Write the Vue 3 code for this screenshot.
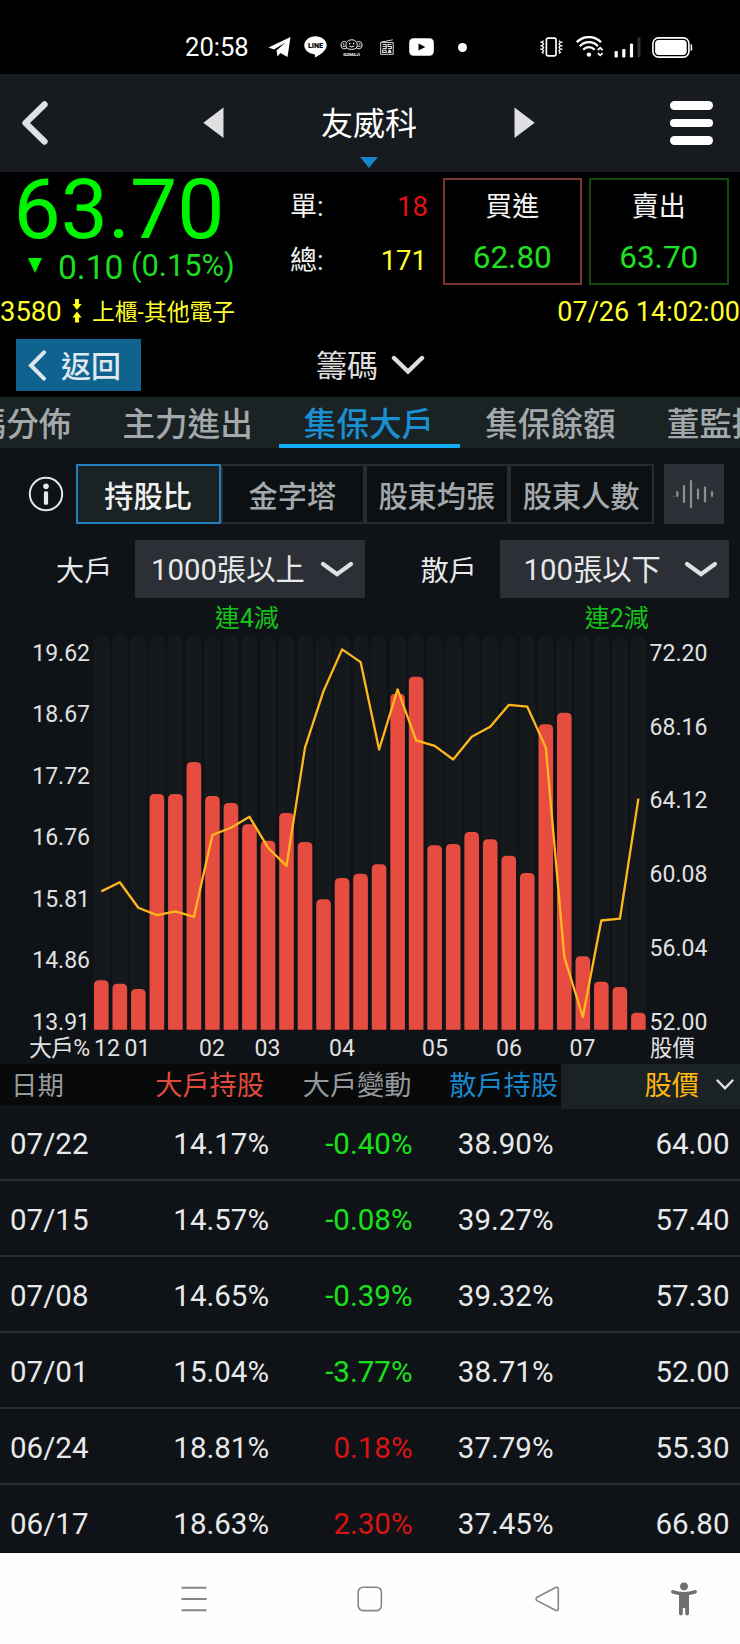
<template>
  <div class="phone">
    <div class="status-bar">
      <span class="clock">20:58</span>
      <svg class="ic-telegram" width="23" height="21" viewBox="0 0 23 21">
        <path d="M0.5 10.5 L22.5 0 L19.5 20 L12.5 16 L9.5 19.5 L8.5 13.5 L17.5 5.5 L6 12.5 Z" fill="#fff" />
      </svg>
      <svg class="ic-line" width="23" height="22" viewBox="0 0 23 22">
        <path d="M11.5 0.3 C5.2 0.3 0.3 4.3 0.3 9.3 C0.3 14 4.5 17.6 10.2 18.2 C11.3 18.5 11 19.6 10.9 21.5 C16 19 22.7 14.8 22.7 9.3 C22.7 4.3 17.8 0.3 11.5 0.3 Z" fill="#fff" />
        <text x="11.5" y="12.1" text-anchor="middle" font-size="7.2" font-weight="900" fill="#000">LINE</text>
      </svg>
      <svg class="ic-gomaji" width="23" height="17" viewBox="0 0 23 17">
        <g fill="none" stroke="#fff" stroke-width="1">
          <path d="M6.5 8.5 C4.8 5 7 0.8 11.7 0.8 C16.4 0.8 18.4 5 16.7 8.5 C15 11 8.4 11 6.5 8.5 Z" />
          <path d="M6 2.9 C2 1.6 0.6 4.4 1.2 7.2 C1.8 10.2 4.8 10.2 6.8 9" />
          <path d="M17.2 2.9 C21 1.6 22.5 4.4 21.9 7.2 C21.2 10.2 18.4 10.2 16.5 9" />
          <path d="M9.3 7 Q11.7 8.8 14.1 7 M2.6 7.2 H5.2 M18.2 7.2 H20.6" />
        </g>
        <circle cx="9.7" cy="4.6" r="0.8" fill="#fff" />
        <circle cx="13.7" cy="4.6" r="0.8" fill="#fff" />
        <circle cx="3.6" cy="5" r="0.7" fill="#fff" />
        <circle cx="19.8" cy="5" r="0.7" fill="#fff" />
        <text x="11.5" y="16.5" text-anchor="middle" font-size="4.4" font-weight="700" fill="#fff">GOMAJI</text>
      </svg>
      <svg class="ic-news" width="14" height="16" viewBox="0 0 14 16">
        <path d="M0.7 15.3 V3.6 H13.2 V15.3 Z M1 3.2 L12.8 0.8" fill="none" stroke="#ddd" stroke-width="1" />
        <path d="M2.6 5.5 H6.2 V9.5 H2.6 M2.6 7.5 H6.2 M11.4 5.5 H8 V7.5 H11.4 V9.5 H8 M2.6 11.2 H6.2 V13.5 H2.6 Z M7.6 13.4 H11.6" fill="none" stroke="#ddd" stroke-width="1.1" />
        <circle cx="9.7" cy="12" r="1.5" fill="#ddd" />
      </svg>
      <svg class="ic-youtube" width="25" height="18" viewBox="0 0 25 18">
        <rect x="0.2" y="0.2" width="24.6" height="17.6" rx="4.2" fill="#fff" />
        <path d="M9.5 5.6 L16.3 9 L9.5 12.4 Z" fill="#000" />
      </svg>
      <span class="dot"></span>
      <svg class="ic-vibrate" width="23" height="20" viewBox="0 0 23 20">
        <rect x="6.4" y="1.1" width="9.6" height="17.8" rx="1.6" fill="none" stroke="#fff" stroke-width="1.7" />
        <path d="M3.6 3.6 L2.2 5.3 L3.6 7 L2.2 8.7 L3.6 10.4 L2.2 12.1 L3.6 13.8 L2.2 15.5 L3.6 16.6 M1 4.5 V6 M1 8 V9.5 M1 11.5 V13 M19 3.6 L20.4 5.3 L19 7 L20.4 8.7 L19 10.4 L20.4 12.1 L19 13.8 L20.4 15.5 L19 16.6 M21.8 4.5 V6 M21.8 8 V9.5 M21.8 11.5 V13" fill="none" stroke="#fff" stroke-width="1.3" />
      </svg>
      <svg class="ic-wifi" width="28" height="22" viewBox="0 0 28 22">
        <g fill="none" stroke="#fff" stroke-width="2.3">
          <path d="M0.8 6.2 C7.5 -0.7 18.3 -0.7 25 6.2" />
          <path d="M3.8 10.2 C8.9 4.7 16.9 4.7 22 10.2" />
          <path d="M7.2 13.8 C10.4 10.3 15.4 10.3 18.6 13.8" />
        </g>
        <circle cx="12.9" cy="18.6" r="2.2" fill="#fff" />
        <path d="M21.8 14.1 L24.2 11.8 L26.6 14.1 M21.8 17.1 L24.2 19.4 L26.6 17.1" fill="none" stroke="#fff" stroke-width="1.7" />
      </svg>
      <svg class="ic-signal" width="27" height="21" viewBox="0 0 27 21">
        <rect x="0.6" y="14" width="3.2" height="6.5" rx="1.2" fill="#fff" />
        <rect x="8.2" y="12" width="3.2" height="8.5" rx="1.2" fill="#fff" />
        <rect x="15.9" y="6.6" width="3.2" height="13.9" rx="1.2" fill="#fff" />
        <rect x="23.5" y="0.5" width="3" height="20" rx="1.2" fill="#333" />
      </svg>
      <svg class="ic-battery" width="41" height="21" viewBox="0 0 41 21">
        <rect x="0.9" y="0.9" width="36" height="19.2" rx="5.6" fill="none" stroke="#fff" stroke-width="1.6" />
        <rect x="3.1" y="3.1" width="31.6" height="14.8" rx="3.6" fill="#fff" />
        <path d="M38.6 7 Q40.2 7 40.2 8.8 V12.2 Q40.2 14 38.6 14 Z" fill="#fff" />
      </svg>
    </div>

    <header class="top-bar">
      <svg class="back" width="28" height="46" viewBox="0 0 28 46">
        <path d="M23.5 4.5 L4.5 23 L23.5 41.5" fill="none" stroke="#e0e1e2" stroke-width="6.4" stroke-linecap="round" stroke-linejoin="round" />
      </svg>
      <svg class="prev" width="21" height="32" viewBox="0 0 21 32">
        <path d="M20.5 0.5 V31 L0.3 15.7 Z" fill="#dfe0e1" />
      </svg>
      <div class="stock-name">
        <span>友威科</span>
        <i class="name-caret"></i>
      </div>
      <svg class="next" width="21" height="32" viewBox="0 0 21 32">
        <path d="M0.5 0.5 V31 L20.7 15.7 Z" fill="#dfe0e1" />
      </svg>
      <div class="burger"><i></i><i></i><i></i></div>
    </header>

    <section class="quote">
      <div class="price-block">
        <div class="price">63.70</div>
        <div class="change">
          <i class="down"></i>
          <span class="diff">0.10</span>
          <span class="pct">(0.15%)</span>
        </div>
      </div>
      <div class="volumes">
        <div class="volume"><span>單:</span><b class="red">18</b></div>
        <div class="volume"><span>總:</span><b class="yellow">171</b></div>
      </div>
      <div class="deal buy"><span>買進</span><b>62.80</b></div>
      <div class="deal sell"><span>賣出</span><b>63.70</b></div>
    </section>

    <div class="meta">
      <span class="code">3580</span>
      <svg width="10" height="24" viewBox="0 0 10 24">
        <path d="M3 0 H7 V5 H9.6 L5 11 L0.4 5 H3 Z M5 12.6 L9.6 18.4 H7 V23.6 H3 V18.4 H0.4 Z" fill="#ffff1c" />
      </svg>
      <span class="market">上櫃-其他電子</span>
      <span class="time">07/26 14:02:00</span>
    </div>

    <div class="section-bar">
      <button class="return">
        <svg width="19" height="31" viewBox="0 0 19 31">
          <path d="M16 2.3 L3 15.5 L16 28.7" fill="none" stroke="#dde6ec" stroke-width="4" stroke-linecap="round" />
        </svg>
        <span>返回</span>
      </button>
      <div class="section-title">
        <span>籌碼</span>
        <svg width="34" height="20" viewBox="0 0 34 20">
          <path d="M3 3 L17 16.5 L31 3" fill="none" stroke="#dcdddd" stroke-width="4.4" stroke-linecap="round" />
        </svg>
      </div>
    </div>

    <nav class="tabs">
      <div v-for="tab in tabs" :key="tab" class="tab" :class="{ active: tab === activeTab }">{{ tab }}</div>
    </nav>

    <div class="modes">
      <svg class="info" width="36" height="36" viewBox="0 0 36 36">
        <circle cx="18" cy="18" r="16.2" fill="none" stroke="#e6e7e8" stroke-width="2" />
        <circle cx="18" cy="10.3" r="2.8" fill="#e6e7e8" />
        <rect x="15.9" y="15.2" width="4.2" height="13.6" rx="1.5" fill="#e6e7e8" />
      </svg>
      <button v-for="mode in modes" :key="mode" class="mode" :class="{ active: mode === activeMode }">{{ mode }}</button>
      <div class="wave">
        <svg width="42" height="30" viewBox="0 0 42 30">
          <path d="M4.3 13 V17 M11 7 V23 M18 2 V28 M25 10.5 V19.5 M32 8.5 V22.5 M39 13 V17" stroke="#8b8e92" stroke-width="2.2" stroke-linecap="round" />
          <circle cx="1" cy="17.8" r="0.6" fill="#8b8e92" />
        </svg>
      </div>
    </div>

    <div class="filters">
      <div v-for="f in filters" :key="f.label" class="filter">
        <label>{{ f.label }}</label>
        <div class="select-wrap">
          <div class="select">
            <span>{{ f.value }}</span>
            <svg width="34" height="17" viewBox="0 0 34 17">
              <path d="M3 3 L17 13.2 L31 3" fill="none" stroke="#dfe0e1" stroke-width="4.2" stroke-linecap="round" />
            </svg>
          </div>
          <div class="trend">{{ f.trend }}</div>
        </div>
      </div>
    </div>

    <svg class="chart" width="740" height="434" viewBox="0 0 740 434">
      <rect v-for="(h, i) in barTops" :key="'t' + i" :x="barX(i) - 8" y="6" width="16" height="394" rx="7" fill="#15191c" />
      <path v-for="(top, i) in barTops" :key="'b' + i" :d="barPath(i, top)" fill="#e64c3f" />
      <polyline :points="linePoints" fill="none" stroke="#ffb71e" stroke-width="2.3" stroke-linejoin="round" />
      <g class="axis">
        <text v-for="(t, i) in leftAxis" :key="t" x="90" :y="30.7 + i * 61.5" text-anchor="end">{{ t }}</text>
        <text v-for="(t, i) in rightAxis" :key="t" x="649.6" :y="30.7 + i * 73.8">{{ t }}</text>
        <text v-for="m in months" :key="m.text" :x="m.x" y="425.6" text-anchor="middle">{{ m.text }}</text>
        <text x="29" y="425.6" textLength="61">大戶%</text>
        <text x="650" y="425.6" class="unit">股價</text>
      </g>
    </svg>

    <div class="table">
      <div class="row head">
        <span class="date">日期</span>
        <span class="big">大戶持股</span>
        <span class="delta">大戶變動</span>
        <span class="small">散戶持股</span>
        <span class="sorted">
          股價
          <svg width="18" height="12" viewBox="0 0 18 12">
            <path d="M1.5 1.5 L9 9.3 L16.5 1.5" fill="none" stroke="#dfe3e4" stroke-width="2.4" stroke-linecap="round" />
          </svg>
        </span>
      </div>
      <div v-for="r in rows" :key="r.date" class="row">
        <span class="date">{{ r.date }}</span>
        <span class="hold">{{ r.big }}</span>
        <span :class="r.diff.startsWith('-') ? 'green' : 'red'">{{ r.diff }}</span>
        <span class="retail">{{ r.small }}</span>
        <span class="close">{{ r.price }}</span>
      </div>
    </div>

    <div class="nav-bar">
      <svg class="nav-menu" width="26" height="26" viewBox="0 0 26 26">
        <path d="M0.5 1.8 H25.5 M0.5 13 H25.5 M0.5 24.2 H25.5" stroke="#858585" stroke-width="1.9" />
      </svg>
      <svg class="nav-home" width="26" height="26" viewBox="0 0 26 26">
        <rect x="1.2" y="1.2" width="23.2" height="23.4" rx="5" fill="none" stroke="#858585" stroke-width="1.6" />
      </svg>
      <svg class="nav-back" width="25" height="26" viewBox="0 0 25 26">
        <path d="M2 11.3 L20.6 1.6 Q23.3 0.6 23.3 3.2 V22.6 Q23.3 25.3 20.6 24.3 L2 14.7 Q0 13 2 11.3 Z" fill="none" stroke="#858585" stroke-width="1.6" />
      </svg>
      <svg class="nav-access" width="26" height="34" viewBox="0 0 26 34">
        <circle cx="13" cy="4.3" r="3.9" fill="#6f6f6f" />
        <path d="M1.8 9.8 Q13 13.6 24.2 9.8" fill="none" stroke="#6f6f6f" stroke-width="3.4" stroke-linecap="round" />
        <path d="M8 11 H18 V31.5 Q18 33.5 16 33.5 Q14.2 33.5 14.2 31.5 V26 H11.8 V31.5 Q11.8 33.5 10 33.5 Q8 33.5 8 31.5 Z" fill="#6f6f6f" />
      </svg>
    </div>
  </div>
</template>

<script setup>
const tabs = ['籌碼分佈', '主力進出', '集保大戶', '集保餘額', '董監持股']
const activeTab = '集保大戶'

const modes = ['持股比', '金字塔', '股東均張', '股東人數']
const activeMode = '持股比'

const filters = [
  { label: '大戶', value: '1000張以上', trend: '連4減' },
  { label: '散戶', value: '100張以下', trend: '連2減' }
]

const leftAxis = ['19.62', '18.67', '17.72', '16.76', '15.81', '14.86', '13.91']
const rightAxis = ['72.20', '68.16', '64.12', '60.08', '56.04', '52.00']
const months = [
  { text: '12', x: 107 },
  { text: '01', x: 137.5 },
  { text: '02', x: 212 },
  { text: '03', x: 267.5 },
  { text: '04', x: 342 },
  { text: '05', x: 435 },
  { text: '06', x: 509 },
  { text: '07', x: 582.5 }
]

// top edge of each weekly bar
const barTops = [
  350.3, 353.7, 359, 164, 164, 132, 166, 173, 194.3, 210.7,
  183, 212, 269.3, 248, 243.7, 234.3, 63.7, 46.7, 215.3, 214,
  202, 209.3, 225.7, 243, 94.3, 82.7, 326.3, 351.7, 357, 382.7
]

// weekly close
const prices = [
  58.9, 59.4, 58, 57.6, 57.8, 57.5, 62, 62.4, 63, 61.3,
  60.3, 66.8, 69.9, 72.2, 71.5, 66.7, 70, 67.2, 66.9, 66.15,
  67.4, 67.95, 69.15, 69.05, 66.8, 55.3, 52, 57.3, 57.4, 64
]

const barX = (i) => 101.3 + i * 18.52
const priceY = (p) => 387 - (p - 52) * 18.2

const barPath = (i, top) => {
  const l = barX(i) - 7.3
  const r = barX(i) + 7.3
  return `M${l} 399.7 V${top + 5} Q${l} ${top} ${l + 5} ${top} H${r - 5} Q${r} ${top} ${r} ${top + 5} V399.7 Z`
}

const linePoints = prices.map((p, i) => `${barX(i).toFixed(1)},${priceY(p).toFixed(1)}`).join(' ')

const rows = [
  { date: '07/22', big: '14.17%', diff: '-0.40%', small: '38.90%', price: '64.00' },
  { date: '07/15', big: '14.57%', diff: '-0.08%', small: '39.27%', price: '57.40' },
  { date: '07/08', big: '14.65%', diff: '-0.39%', small: '39.32%', price: '57.30' },
  { date: '07/01', big: '15.04%', diff: '-3.77%', small: '38.71%', price: '52.00' },
  { date: '06/24', big: '18.81%', diff: '0.18%', small: '37.79%', price: '55.30' },
  { date: '06/17', big: '18.63%', diff: '2.30%', small: '37.45%', price: '66.80' }
]
</script>

<style>
body {
  margin: 0;
  background: #000;
}
</style>

<style scoped>
.phone {
  width: 740px;
  height: 1644px;
  overflow: hidden;
  display: flex;
  flex-direction: column;
  background: #0f1216;
  color: #e8e9ea;
  font-family: Roboto, "Noto Sans CJK TC", sans-serif;
}

.phone > * {
  flex: none;
  box-sizing: border-box;
}

svg {
  display: block;
  flex: none;
}

b {
  font-weight: 400;
}

button {
  font-family: inherit;
  color: inherit;
  padding: 0;
  margin: 0;
}

.red {
  color: #e11313;
}

.green {
  color: #18e21c;
}

.yellow {
  color: #ffff2e;
}

/* status bar */
.status-bar {
  height: 74px;
  padding: 20px 0 0 185px;
  display: flex;
  align-items: center;
  background: #000;
  color: #fff;
}

.clock {
  width: 83px;
  font-size: 25.6px;
  line-height: 30px;
}

.ic-line {
  margin-left: 13px;
}

.ic-gomaji {
  margin-left: 13px;
}

.ic-news {
  margin-left: 16.5px;
}

.ic-youtube {
  margin-left: 15.5px;
}

.dot {
  width: 9px;
  height: 9px;
  border-radius: 50%;
  background: #fff;
  margin-left: 23.5px;
}

.ic-vibrate {
  margin-left: 73.5px;
}

.ic-wifi {
  margin-left: 13px;
}

.ic-signal {
  margin-left: 9.5px;
}

.ic-battery {
  margin-left: 11.5px;
}

/* title bar */
.top-bar {
  height: 98px;
  display: flex;
  align-items: center;
  background: #171a1e;
}

.back {
  margin-left: 20.5px;
}

.prev {
  margin-left: 154.5px;
}

.stock-name {
  width: 290px;
  height: 98px;
  display: flex;
  flex-direction: column;
  align-items: center;
  justify-content: space-between;
  color: #fff;
  font-size: 32px;
  line-height: 86px;
}

.stock-name span {
  height: 83px;
  padding-top: 7px;
  box-sizing: border-box;
}

.name-caret {
  border: 9px solid transparent;
  border-top: 11px solid #1485c9;
  border-bottom: 0;
  margin-bottom: 4px;
}

.burger {
  width: 43px;
  height: 44px;
  margin-left: 135px;
  display: flex;
  flex-direction: column;
  justify-content: space-between;
}

.burger i {
  height: 8.6px;
  border-radius: 5px;
  background: #fff;
}

/* quote */
.quote {
  height: 117px;
  display: flex;
  background: #000;
}

.price-block {
  width: 290px;
}

.price {
  height: 76px;
  padding-left: 13.5px;
  font-size: 84px;
  line-height: 76px;
  color: #00f500;
}

.change {
  height: 40px;
  display: flex;
  align-items: center;
  color: #1edc22;
}

.down {
  border: 7.5px solid transparent;
  border-top: 15px solid #00f500;
  border-bottom: 0;
  margin: -6px 0 0 27.5px;
}

.diff {
  font-size: 33.6px;
  line-height: 38px;
  margin: -1px 0 0 16.5px;
}

.pct {
  font-size: 30.8px;
  line-height: 34px;
  margin: -5px 0 0 7.5px;
}

.volumes {
  width: 138px;
  padding-top: 8px;
}

.volume {
  height: 53.5px;
  display: flex;
  justify-content: space-between;
  font-size: 27px;
  line-height: 55px;
  color: #f2f2f2;
}

.volume b {
  font-size: 27.5px;
  margin-top: -1px;
}

.volume .yellow {
  margin-right: 1px;
}

.deal {
  width: 139.5px;
  height: 107px;
  margin: 6px 0 0 14.5px;
  padding-top: 1px;
  box-sizing: border-box;
  border: 2px solid #7b3533;
  display: flex;
  flex-direction: column;
  align-items: center;
  color: #f4f4f4;
}

.deal.sell {
  margin-left: 7px;
  border-color: #14490f;
}

.deal span {
  font-size: 27px;
  line-height: 52px;
}

.deal b {
  font-size: 31.5px;
  line-height: 50px;
  color: #1fe022;
}

.meta {
  height: 42px;
  display: flex;
  align-items: center;
  background: #000;
  color: #ffff2e;
  font-size: 27px;
  line-height: 42px;
}

.meta svg {
  margin: 2px 0 0 11px;
}

.code {
  width: 60.5px;
  padding-top: 3px;
  font-size: 27.4px;
}

.market {
  font-size: 22.8px;
  margin: 6px 0 0 10.5px;
}

.time {
  margin-left: auto;
  padding-top: 3px;
}

.section-bar {
  height: 66px;
  padding: 8px 0 0 16px;
  display: flex;
  background: #000;
}

.return {
  width: 125px;
  height: 52px;
  border: 0;
  background: #10628f;
  display: flex;
  align-items: center;
  padding-left: 11.5px;
  font-size: 30px;
  font-weight: 500;
  line-height: 52px;
  color: #dfe8ee;
}

.return span {
  margin: 3px 0 0 14.5px;
}

.section-title {
  display: flex;
  align-items: center;
  height: 52px;
  margin-left: 175px;
  font-size: 31px;
  line-height: 52px;
  color: #dedede;
}

.section-title span {
  padding-top: 4px;
}

.section-title svg {
  margin-left: 13px;
}

/* tabs */
.tabs {
  height: 51px;
  display: flex;
  margin-left: -84px;
  width: 907px;
  background: #1a2223;
}

.tab {
  flex: 1;
  text-align: center;
  font-size: 32.6px;
  font-weight: 500;
  line-height: 56px;
  color: #a3a9ab;
  box-sizing: border-box;
  height: 51px;
  padding-right: 1px;
}

.tab.active {
  color: #1a8fd2;
  border-bottom: 4px solid #13acf7;
}

/* chart mode buttons */
.modes {
  height: 92px;
  display: flex;
  align-items: center;
}

.info {
  margin-left: 28px;
}

.mode {
  width: 144.4px;
  height: 60px;
  box-sizing: border-box;
  border: 2px solid #292c2f;
  background: #0d1013;
  font-size: 29.2px;
  font-weight: 500;
  line-height: 60px;
  padding: 1px 1px 0 0;
  color: #a3a9ac;
  white-space: nowrap;
}

.info + .mode {
  margin-left: 12.3px;
}

.mode.active {
  border-color: #2580b9;
  background: #1b2224;
  color: #f1f1f1;
}

.wave {
  width: 60px;
  height: 60px;
  margin-left: 9.7px;
  display: flex;
  align-items: center;
  justify-content: center;
  background: #2d3036;
}

/* holder filters */
.filters {
  height: 90px;
  display: flex;
}

.filter {
  width: 364.6px;
  display: flex;
}

.filter label {
  width: 135px;
  padding-left: 56px;
  box-sizing: border-box;
  font-size: 28.2px;
  line-height: 63px;
}

.select {
  width: 229.5px;
  height: 58px;
  box-sizing: border-box;
  padding: 0 11px 0 16px;
  display: flex;
  align-items: center;
  background: #2c2f35;
  font-size: 29.3px;
  line-height: 63px;
}

.select span {
  flex: 1;
  height: 60px;
}

.filter + .filter .select span {
  padding-left: 8px;
}

.trend {
  text-align: center;
  padding-right: 6px;
  font-size: 25px;
  line-height: 41px;
  height: 32px;
  color: #16c31a;
}

.filter + .filter .trend {
  padding: 0 0 0 5px;
}

/* chart */
.axis text {
  font-size: 23px;
  fill: #e0e1e2;
}

.axis .unit {
  font-size: 22.4px;
}

/* holdings table */
.row {
  height: 76px;
  box-sizing: border-box;
  display: grid;
  grid-template-columns: 120px 150px 142.5px 148.5px 179px;
  border-bottom: 2px solid #292d2f;
  font-size: 29.5px;
  line-height: 79px;
  text-align: right;
}

.row:last-child {
  height: 68px;
  border-bottom-color: #0b0d0f;
}

.row .date {
  text-align: left;
  padding-left: 10px;
}

.row .hold {
  padding-right: 1px;
}

.row .retail {
  padding-right: 7.5px;
}

.row .close {
  padding-right: 10.5px;
}

.row.head {
  height: 41px;
  border: 0;
  background: #07090a;
  font-size: 27.2px;
  line-height: 45px;
  color: #979a9c;
}

.head .date {
  padding-left: 11px;
  font-size: 26.4px;
}

.head .big {
  color: #e04c3c;
  padding-right: 6px;
}

.head .delta {
  padding-right: 1px;
}

.head .small {
  color: #1b87cb;
  padding-right: 3px;
}

.head .sorted {
  display: flex;
  align-items: center;
  justify-content: flex-end;
  padding-right: 6px;
  background: #1a2225;
  color: #ffb80e;
}

.sorted svg {
  margin: -3px 0 0 17px;
}

.row > .red {
  color: #d91414;
}

/* system navigation */
.nav-bar {
  flex: 1;
  display: flex;
  align-items: center;
  background: #fdfefd;
}

.nav-menu {
  margin-left: 180.5px;
}

.nav-home {
  margin-left: 150.5px;
}

.nav-back {
  margin-left: 152px;
}

.nav-access {
  margin-left: 111px;
}
</style>
